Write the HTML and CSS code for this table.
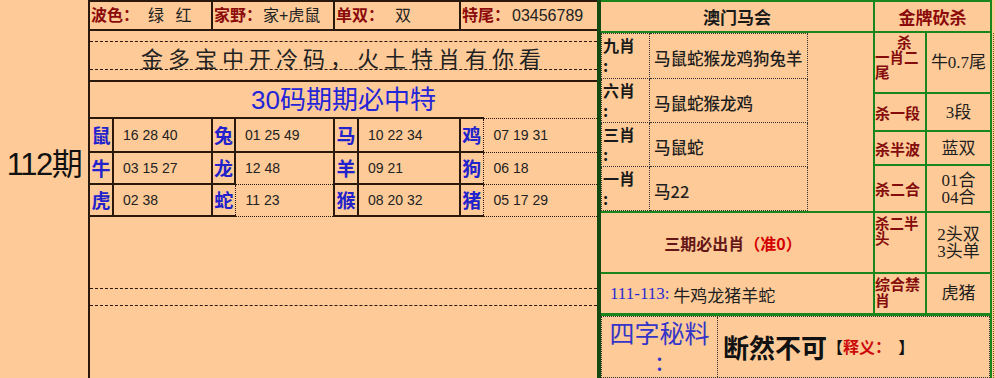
FILE: index.html
```html
<!DOCTYPE html>
<html lang="zh">
<head>
<meta charset="utf-8">
<title>112期</title>
<link rel="stylesheet" href="styles.css">
</head>
<body>
<div class="page">
  <div class="issue">112期</div>

  <div class="mid">
    <div class="info">
      <div class="info-cell"><span class="lbl">波色：</span><span class="val v1">绿 红</span></div>
      <div class="info-cell"><span class="lbl">家野：</span><span class="val v2">家+虎鼠</span></div>
      <div class="info-cell"><span class="lbl">单双：</span><span class="val v3">双</span></div>
      <div class="info-cell"><span class="lbl">特尾：</span><span class="val v4">03456789</span></div>
    </div>
    <div class="slogan-row"><div class="slogan">金多宝中开冷码，火土特肖有你看</div></div>
    <div class="title30">30码期期必中特</div>
    <table class="zodiac">
      <colgroup><col class="c-z"><col class="c-n1"><col class="c-z"><col class="c-n2"><col class="c-z3"><col class="c-n3"><col class="c-z"><col class="c-n4"></colgroup>
      <tr class="r1"><th class="first">鼠</th><td>16 28 40</td><th>兔</th><td>01 25 49</td><th>马</th><td>10 22 34</td><th class="pre-dot">鸡</th><td class="dot last">07 19 31</td></tr>
      <tr class="r2"><th class="first">牛</th><td>03 15 27</td><th>龙</th><td class="dot-b">12 48</td><th>羊</th><td>09 21</td><th class="pre-dot">狗</th><td class="dot last">06 18</td></tr>
      <tr class="r3"><th class="first">虎</th><td>02 38</td><th class="pre-dot">蛇</th><td class="dot">11 23</td><th>猴</th><td>08 20 32</td><th class="pre-dot">猪</th><td class="dot last">05 17 29</td></tr>
    </table>
    <div class="rest"><div class="rest-band"></div></div>
  </div>

  <div class="right">
    <div class="rgrid">
      <div class="hd hd-main">澳门马会</div>
      <div class="hd hd-kill">金牌砍杀</div>

      <div class="xiao">
        <div class="xrow top"><div class="xl">九肖<br>:</div><div class="xc">马鼠蛇猴龙鸡狗兔羊</div><div class="xe"></div></div>
        <div class="xrow"><div class="xl">六肖<br>:</div><div class="xc">马鼠蛇猴龙鸡</div><div class="xe"></div></div>
        <div class="xrow"><div class="xl">三肖<br>:</div><div class="xc">马鼠蛇</div><div class="xe"></div></div>
        <div class="xrow"><div class="xl">一肖<br>:</div><div class="xc">马22</div><div class="xe"></div></div>
      </div>

      <div class="kl kl-multi"><div class="ind">杀</div><div>一肖二</div><div>尾</div></div>
      <div class="kv">牛0.7尾</div>
      <div class="kl kl-mid">杀一段</div>
      <div class="kv">3段</div>
      <div class="kl kl-mid">杀半波</div>
      <div class="kv">蓝双</div>
      <div class="kl kl-mid">杀二合</div>
      <div class="kv">01合<br>04合</div>

      <div class="must">三期必出肖<span class="acc">（准0）</span></div>
      <div class="kl kl-top">杀二半<br>头</div>
      <div class="kv kv-two">2头双<br>3头单</div>

      <div class="recent"><span class="rng">111-113:</span>&nbsp;牛鸡龙猪羊蛇</div>
      <div class="kl kl-top2">综合禁<br>肖</div>
      <div class="kv">虎猪</div>

      <div class="secret">
        <div class="sl">四字秘料<br>:</div>
        <div class="sr"><span class="big">断然不可</span><span class="br">【</span><span class="expl">释义：</span><span class="br">&nbsp;&nbsp;】</span></div>
      </div>
    </div>
  </div>
</div>
</body>
</html>
```

FILE: styles.css
```css
* { box-sizing: border-box; }
html, body { margin: 0; padding: 0; }
body {
  background: #fecb98;
  font-family: "Liberation Sans", "Noto Sans CJK SC", sans-serif;
  color: #1c1410;
}
.page {
  display: flex;
  width: 995px;
  height: 378px;
  overflow: hidden;
}

/* left issue column */
.issue {
  width: 88px;
  flex: none;
  padding-top: 146px;
  text-align: center;
  font-size: 31px;
  line-height: 38px;
  letter-spacing: -1.5px;
  color: #111;
}

/* middle panel */
.mid {
  width: 509px;
  flex: none;
  border-left: 2px solid #2b180c;
  border-top: 2px solid #2b180c;
  display: flex;
  flex-direction: column;
}
.info {
  display: grid;
  grid-template-columns: 123px 122px 126px 1fr;
  height: 29px;
  border-bottom: 2px solid #2b180c;
}
.info-cell {
  border-right: 2px solid #2b180c;
  font-size: 16px;
  line-height: 27px;
  white-space: nowrap;
  padding-left: 1px;
}
.info-cell:last-child { border-right: none; }
.lbl { color: #8c0a0a; font-weight: 700; }
.val { color: #222; }
.v1 { margin-left: 9px; word-spacing: 7px; }
.v2 { margin-left: 1px; }
.v3 { margin-left: 11px; }
.v4 { margin-left: 2px; }

.slogan-row {
  height: 51px;
  padding-top: 10px;
  border-bottom: 2px solid #2b180c;
}
.slogan {
  height: 29px;
  border-top: 1px dashed #2b180c;
  border-bottom: 1px dashed #2b180c;
  text-align: center;
  font-family: "Noto Sans CJK SC", sans-serif;
  font-size: 22px;
  line-height: 28px;
  padding-top: 1px;
  letter-spacing: 5px;
  color: #222;
}
.title30 {
  height: 35px;
  line-height: 36px;
  text-align: center;
  font-size: 26px;
  color: #2424d8;
}

/* zodiac table */
.zodiac {
  width: 507px;
  border-collapse: collapse;
  table-layout: fixed;
}
.c-z { width: 23px; }
.c-z3 { width: 24px; }
.c-n1 { width: 99px; }
.c-n2 { width: 99px; }
.c-n3 { width: 102px; }
.c-n4 { width: 114px; }
.zodiac tr.r1 { height: 34px; }
.zodiac tr.r2 { height: 32px; }
.zodiac tr.r3 { height: 32px; }
.zodiac th,
.zodiac td {
  border: 2px solid #2b180c;
  padding: 0;
}
.zodiac th {
  font-family: "Noto Sans CJK SC", sans-serif;
  font-size: 19px;
  font-weight: 700;
  color: #2222cc;
  text-align: center;
  line-height: 20px;
}
.zodiac td {
  font-size: 14px;
  padding-left: 9px;
  color: #222;
  text-align: left;
}
.zodiac th.first { border-left: none; }
.zodiac td.last { border-right: none; }
.zodiac th.pre-dot { border-right: 1px dotted #2b180c; }
.zodiac td.dot { border: 1px dotted #2b180c; padding-left: 10px; }
.zodiac td.dot.last { border-right: none; }
.zodiac td.dot-b { border-bottom: 1px dotted #2b180c; }

.rest {
  flex: 1;
  padding-top: 71px;
}
.rest-band {
  height: 18px;
  border-top: 1px dashed #2b180c;
  border-bottom: 1px dashed #2b180c;
}

/* right panel */
.right {
  flex: none;
  width: 398px;
  height: 378px;
  border-left: 4px solid #124a12;
  display: flex;
}
.rgrid {
  flex: none;
  display: grid;
  width: 391px;
  height: 378px;
  grid-template-columns: 272px 50px 63px;
  grid-template-rows: 29px 59px 36px 32px 45px 59px 39px 1fr;
  gap: 2px;
  padding: 2px 2px 0 0;
  background: #18861c;
}
.rgrid > div { background: #fecb98; }
.right::after {
  content: "";
  flex: none;
  width: 3px;
  border-left: 1px dotted #6a5a30;
  margin-left: 1px;
  margin-top: 33px;
}

.hd {
  display: flex;
  align-items: center;
  justify-content: center;
  font-family: "Noto Sans CJK SC", sans-serif;
  font-weight: 700;
}
.hd-main { font-size: 17px; color: #1a1a1a; }
.hd-kill { grid-column: 2 / span 2; font-size: 17px; color: #8b0a0a; }

.xiao {
  grid-column: 1;
  grid-row: 2 / span 4;
  display: grid;
  grid-template-rows: 46px 44px 44px 44px;
}
.xrow {
  display: grid;
  grid-template-columns: 49px 158px 1fr;
}
.xl {
  border-left: 1px dotted #333;
  border-right: 1px dotted #333;
  border-bottom: 1px dotted #333;
  font-family: "Noto Sans CJK SC", sans-serif;
  font-weight: 700;
  font-size: 16px;
  line-height: 20px;
  padding: 1px 0 0 1px;
  color: #1a1a1a;
}
.xc {
  border-right: 1px dotted #333;
  border-bottom: 1px dotted #333;
  display: flex;
  align-items: center;
  padding: 4px 0 0 4px;
  font-family: "Noto Sans CJK SC", sans-serif;
  font-weight: 500;
  font-size: 16.5px;
  color: #1e1e1e;
}
.xrow.top .xl,
.xrow.top .xc { border-top: 1px dotted #333; }

.kl {
  font-family: "Noto Sans CJK SC", sans-serif;
  font-weight: 700;
  font-size: 15px;
  color: #850c0c;
}
.kl-multi { font-size: 14.5px; line-height: 15px; padding-top: 1px; }
.kl-multi .ind { padding-left: 22px; }
.kl-mid { display: flex; align-items: center; }
.kl-top { font-size: 14.5px; line-height: 15px; padding-top: 2px; }
.kl-top2 { line-height: 16px; padding-top: 2px; }

.kv {
  display: flex;
  align-items: center;
  justify-content: center;
  text-align: center;
  font-family: "Liberation Serif", "Noto Sans CJK SC", serif;
  font-size: 17px;
  line-height: 17px;
  color: #1e1e1e;
}

.must {
  display: flex;
  align-items: center;
  justify-content: center;
  padding-right: 8px;
  font-family: "Noto Sans CJK SC", sans-serif;
  font-weight: 700;
  font-size: 16px;
  color: #661616;
}
.must .acc { color: #d40000; }

.recent {
  display: flex;
  align-items: center;
  padding: 1px 0 0 9px;
  font-family: "Noto Sans CJK SC", sans-serif;
  font-size: 17px;
  color: #1e1e1e;
  white-space: nowrap;
}
.recent .rng { font-family: "Liberation Serif", serif; color: #2a2ad0; }

.secret {
  grid-column: 1 / -1;
  display: grid;
  grid-template-columns: 116px 1fr;
  border: 1px dotted #333;
  margin-top: 1px;
}
.sl {
  border-right: 1px dotted #333;
  text-align: center;
  font-family: "Noto Sans CJK SC", sans-serif;
  font-weight: 400;
  color: #3434c8;
  font-size: 25px;
  line-height: 28px;
  padding-top: 1px;
}
.sr {
  display: flex;
  align-items: center;
  padding: 0 0 2px 5px;
  font-family: "Noto Sans CJK SC", sans-serif;
  white-space: nowrap;
}
.sr .big { font-size: 26px; font-weight: 700; color: #111; }
.sr .br { font-size: 16px; font-weight: 700; color: #111; }
.sr .expl { font-size: 16px; font-weight: 700; color: #cc0a0a; }
```
